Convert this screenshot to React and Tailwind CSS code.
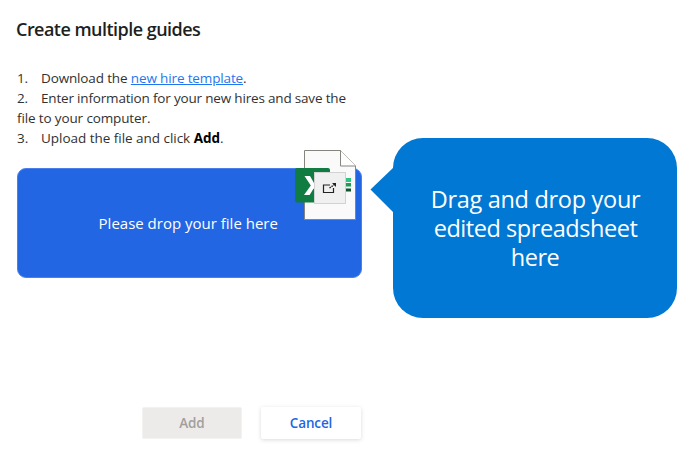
function FileBadge() {
  return (
    <svg
      className="absolute left-[277px] -top-[20px]"
      width="64"
      height="73"
      viewBox="0 0 64 73"
      fill="none"
    >
      <path d="M9.5 1.5H45.5L60.5 17V70.5H9.5Z" fill="#fafafa" stroke="#85847f" />
      <path d="M45.5 1.5V17H60.5" fill="#fff" stroke="#85847f" />
      <path d="M50 29h6v4h-6z" fill="#2fc481" />
      <path d="M50 34h6v3.5h-6z" fill="#209a57" />
      <path d="M50 39.5h6v3h-6z" fill="#10532c" />
      <rect x="0" y="19" width="35" height="34.5" rx="2" fill="#107c41" />
      <path d="M9.5 27h5.500l4 7 4-7h4.400l-6.100 9.600 6.200 9.400h-5.200l-3.700-6.600-4 6.600H9l6.800-9.500z" fill="#fff" />
      <rect x="19.500" y="23.500" width="31" height="31" fill="#f0f0f0" stroke="#d2d2d2" />
      <path d="M35 36H28.500V43.500H38.500V39" stroke="#222" strokeWidth="1.200" />
      <path d="M34.500 39L39.500 35.500" stroke="#222" strokeWidth="1.400" strokeDasharray="1.600 .8" />
      <path d="M37 34H41V38z" fill="#222" />
    </svg>
  );
}

export default function App() {
  return (
    <main className="flex h-[456px] w-[677px] overflow-hidden bg-white font-['Open_Sans','Noto_Sans',sans-serif] text-[#323130]">
      <section className="w-[362px] shrink-0 pl-[17px] pt-[17px]">
        <h1 className="-ml-px h-6 whitespace-nowrap text-[18px] font-semibold leading-6 tracking-[-0.53px] text-[#201f1e]">
          Create multiple guides
        </h1>
        <div className="mt-[27px] whitespace-nowrap text-[13.5px] leading-5 tracking-[-0.18px]">
          <p className="flex tracking-[-0.14px]">
            <span className="w-6">1.</span>
            <span>
              Download the{" "}
              <a className="text-[#1f76f0] underline underline-offset-1">new hire template</a>.
            </span>
          </p>
          <p className="flex">
            <span className="w-6">2.</span>
            <span>Enter information for your new hires and save the</span>
          </p>
          <p className="tracking-[-0.13px]">file to your computer.</p>
          <p className="flex tracking-[-0.03px]">
            <span className="w-6">3.</span>
            <span>
              Upload the file and click <b className="font-bold text-black">Add</b>.
            </span>
          </p>
        </div>
        <div className="relative mt-5 flex h-[110px] w-[344.5px] items-center justify-center rounded-[9px] border border-[#4b80ec] bg-[#2266e3] text-[15px] text-white">
          <span className="-ml-0.5 pt-px">Please drop your file here</span>
          <FileBadge />
        </div>
        <div className="mr-px mt-[129px] flex justify-end gap-[19px] text-[13.5px] font-semibold tracking-[-0.15px]">
          <button className="h-8 w-[100px] rounded-[2px] border border-[#f3f2f1] bg-[#edebe9] text-[#a19f9d]">Add</button>
          <button className="h-8 w-[100px] rounded-[2px] bg-white text-[#2266e3] shadow-[0_1px_4px_rgba(0,0,0,0.15)]">Cancel</button>
        </div>
      </section>
      <aside className="ml-2 mt-[138px] flex h-[180px] w-[307px] shrink-0">
        <svg className="mt-[29px] shrink-0" width="24" height="48" viewBox="0 0 24 48">
          <path d="M0.500 22.500L24 0V46z" fill="#0078d4" />
        </svg>
        <div className="-ml-px flex h-[180px] w-[284px] flex-col items-center justify-center rounded-[30px] bg-[#0078d4] text-center text-[23.5px] leading-[29px] text-white">
          <p className="ml-px tracking-[-0.3px]">Drag and drop your</p>
          <p className="ml-px tracking-[-0.45px]">edited spreadsheet</p>
          <p className="tracking-[-0.5px]">here</p>
        </div>
      </aside>
    </main>
  );
}
